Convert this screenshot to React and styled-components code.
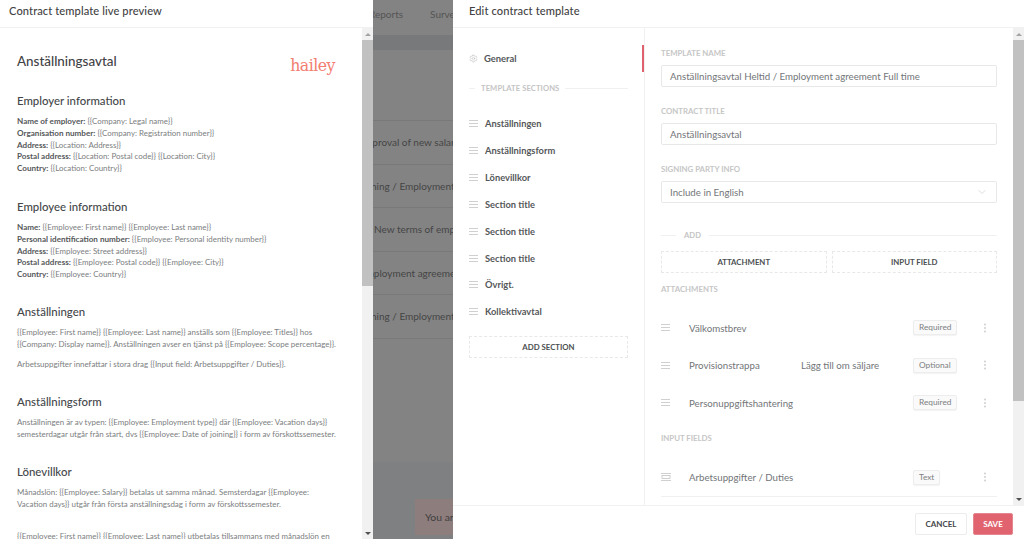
import React from 'react';
import styled, { createGlobalStyle } from 'styled-components';
import { Settings, ChevronDown } from 'lucide-react';

const GlobalStyle = createGlobalStyle`
    html, body {
        margin: 0;
        height: 100%;
        overflow: hidden;
        background: #fff;
        font-family: Lato, "Open Sans", sans-serif;
    }
    #root {
        height: 100%;
    }
`;

const Page = styled.div`
    display: flex;
    height: 539px;
    width: 1024px;
    overflow: hidden;
`;

const PreviewPanel = styled.section`
    width: 373px;
    flex: none;
    display: flex;
    flex-direction: column;
    background: #fff;
`;

const PanelHeader = styled.header`
    height: 28px;
    flex: none;
    box-sizing: border-box;
    padding: 0 ${(props) => props.$pad}px 7px;
    display: flex;
    align-items: center;
    border-bottom: 1px solid #f1f1f1;
    font-size: 11.1px;
    font-weight: 500;
    color: #3f4244;
    letter-spacing: 0.1px;
`;

const PanelBody = styled.div`
    flex: 1;
    min-height: 0;
    display: flex;
`;

const Document = styled.div`
    flex: 1;
    min-width: 0;
    height: 511px;
    overflow: hidden;
    padding: 25px 0 0 17px;
    box-sizing: border-box;
    color: #7b7e80;
    font-size: 7.93px;
    line-height: 11.8px;
`;

const DocTop = styled.div`
    display: flex;
    justify-content: space-between;
    padding-right: 27px;
    height: 32px;
`;

const DocTitle = styled.h1`
    margin: 0;
    font-size: 13.4px;
    line-height: 17px;
    font-weight: 500;
    color: #3f4244;
`;

const Logo = styled.div`
    font-family: "DejaVu Serif Condensed", "DejaVu Serif", serif;
    font-size: 17.5px;
    line-height: 22px;
    color: #f37d70;
    letter-spacing: -0.5px;
    padding-top: 1px;
`;

const DocHeading = styled.h2`
    margin: ${(props) => props.$top}px 0 0;
    font-size: 11.4px;
    line-height: 16px;
    font-weight: 500;
    color: #44474a;
`;

const DocLines = styled.div`
    margin-top: ${(props) => props.$top || 7}px;
`;

const DocLine = styled.div`
    white-space: nowrap;
    b {
        font-size: 8.1px;
        font-weight: 700;
        color: #55585a;
    }
`;

const ScrollTrack = styled.div`
    width: 11px;
    flex: none;
    background: #f1f1f1;
    display: flex;
    flex-direction: column;
`;

const ScrollArrow = styled.div`
    height: 12px;
    flex: none;
    display: flex;
    align-items: center;
    justify-content: center;
    &::after {
        content: '';
        border-left: 3px solid transparent;
        border-right: 3px solid transparent;
        ${(props) => (props.$down ? 'border-top: 3px solid #505050;' : 'border-bottom: 3px solid #a3a3a3;')}
    }
`;

const ScrollThumb = styled.div`
    height: ${(props) => props.$h}px;
    flex: none;
    background: #c1c1c1;
`;

const ScrollRest = styled.div`
    flex: 1;
`;

const Backdrop = styled.div`
    position: relative;
    width: 80px;
    flex: none;
    overflow: hidden;
    background: #838383;
    color: #454545;
    font-size: 10px;
    display: flex;
    flex-direction: column;
`;

const BackNav = styled.div`
    height: 28px;
    flex: none;
    display: flex;
    gap: 27px;
    align-items: center;
    margin-left: -4px;
    font-size: 10px;
    color: #555;
    white-space: nowrap;
`;

const BackTableHead = styled.div`
    height: 15px;
    flex: none;
    margin-top: 7px;
    background: #77797a;
`;

const BackGap = styled.div`
    height: 70px;
    flex: none;
`;

const BackRow = styled.div`
    height: 43.5px;
    flex: none;
    box-sizing: border-box;
    border-top: 1px solid #797979;
    display: flex;
    align-items: center;
    white-space: nowrap;
    padding-left: ${(props) => props.$indent}px;
`;

const BackRowText = styled.span`
    margin-left: ${(props) => props.$shift}px;
`;

const BackEmpty = styled.div`
    height: 123px;
    flex: none;
    border-top: 1px solid #797979;
`;

const BackFooter = styled.div`
    flex: 1;
    background: #7e8081;
`;

const Toast = styled.div`
    position: absolute;
    left: 42px;
    top: 499px;
    width: 60px;
    height: 36px;
    background: #8d7d7d;
    color: #3f3f3f;
    font-size: 10.4px;
    padding-left: 10px;
    line-height: 36px;
    white-space: nowrap;
`;

const EditPanel = styled.section`
    flex: 1;
    min-width: 0;
    display: flex;
    flex-direction: column;
    background: #fff;
`;

const EditBody = styled.div`
    height: 478px;
    flex: none;
    display: flex;
    border-bottom: 1px solid #f1f1f1;
    box-sizing: border-box;
`;

const Sidebar = styled.nav`
    width: 192px;
    flex: none;
    box-sizing: border-box;
    border-right: 1px solid #f1f1f1;
    padding: 17px 16px 0 16px;
    position: relative;
`;

const ActiveMark = styled.div`
    position: absolute;
    right: 0;
    top: 17px;
    width: 2px;
    height: 27px;
    background: #e0616d;
`;

const GeneralItem = styled.div`
    display: flex;
    align-items: center;
    gap: 6px;
    height: 27px;
    font-size: 9.4px;
    font-weight: 700;
    color: #55585a;
    padding-bottom: 1px;
    box-sizing: border-box;
    margin-bottom: 11px;
    svg {
        color: #b9b9b9;
    }
`;

const SectionDivider = styled.div`
    display: flex;
    align-items: center;
    gap: ${(props) => props.$gap}px;
    font-size: 7.6px;
    font-weight: 700;
    color: #c4c4c4;
    letter-spacing: 0.1px;
    &::before {
        content: '';
        width: ${(props) => props.$lead}px;
        height: 1px;
        background: #f0f0f0;
    }
    &::after {
        content: '';
        flex: 1;
        height: 1px;
        background: #f0f0f0;
    }
`;

const SectionList = styled.div`
    margin-top: 17.5px;
    display: flex;
    flex-direction: column;
`;

const SectionItem = styled.div`
    height: 26.85px;
    display: flex;
    align-items: center;
    gap: 7px;
    font-size: 9.3px;
    font-weight: 700;
    color: #55585a;
`;

const DashedButton = styled.button`
    width: ${(props) => props.$width || '100%'};
    height: 22px;
    flex: ${(props) => props.$flex || 'none'};
    padding: 0;
    background: #fff;
    border: 1px dashed #e8e8e8;
    font-family: inherit;
    font-size: 7.8px;
    font-weight: 700;
    color: #4c4f51;
    cursor: pointer;
`;

const AddSectionSlot = styled.div`
    margin-top: 8.5px;
`;

const MainColumn = styled.div`
    flex: 1;
    min-width: 0;
    display: flex;
`;

const MainScroll = styled.div`
    flex: 1;
    min-width: 0;
    padding: 20px 16px 0 16px;
    overflow: hidden;
    box-sizing: border-box;
`;

const FieldLabel = styled.div`
    font-size: 7.8px;
    line-height: 10px;
    font-weight: 700;
    color: #c6c6c6;
    margin-top: ${(props) => props.$top || 0}px;
`;

const TextBox = styled.div`
    height: 22px;
    margin-top: 7px;
    box-sizing: border-box;
    border: 1px solid #e8e8e8;
    border-radius: 2px;
    padding: 0 8px;
    display: flex;
    align-items: center;
    justify-content: space-between;
    font-size: 9.7px;
    color: #727578;
    svg {
        color: #bbb;
    }
`;

const ButtonRow = styled.div`
    display: flex;
    gap: 5px;
    margin-top: 11px;
`;

const RowList = styled.div`
    margin-top: ${(props) => props.$top}px;
`;

const ItemRow = styled.div`
    height: 37.5px;
    display: grid;
    grid-template-columns: 28px 112px 112px 1fr 24px;
    align-items: center;
    font-size: 9.7px;
    color: #727578;
    ${(props) => props.$ruled && 'border-bottom: 1px solid #f0f0f0;'}
`;

const Badge = styled.span`
    justify-self: start;
    height: 15px;
    line-height: 13px;
    box-sizing: border-box;
    border: 1px solid #ededed;
    border-radius: 2px;
    background: #fafafa;
    padding: 0 5px;
    font-size: 8.3px;
    color: #7d8082;
    box-shadow: 0 1px 1px rgba(0, 0, 0, 0.05);
`;

const Dots = styled.span`
    justify-self: center;
    width: 2px;
    height: 2px;
    border-radius: 50%;
    background: #cfcfcf;
    box-shadow: 0 -3.5px 0 #cfcfcf, 0 3.5px 0 #cfcfcf;
`;

const Footer = styled.footer`
    flex: 1;
    display: flex;
    justify-content: flex-end;
    align-items: center;
    gap: 6px;
    padding: 3px 11px 0 0;
`;

const FooterButton = styled.button`
    height: 22px;
    width: ${(props) => props.$width}px;
    padding: 0;
    border-radius: 2px;
    font-family: inherit;
    font-size: 8px;
    font-weight: 700;
    border: 1px solid ${(props) => (props.$primary ? '#e4868f' : '#ececec')};
    background: ${(props) => (props.$primary ? '#e0636f' : '#fff')};
    color: ${(props) => (props.$primary ? '#fff' : '#44474a')};
    cursor: pointer;
`;

const DragIcon = () => (
    <svg width="9" height="7" viewBox="0 0 9 7" fill="none" stroke="#c4c4c4" strokeWidth="0.8">
        <path d="M0 0.5H9M0 3.5H9M0 6.5H9" />
    </svg>
);

const InputIcon = () => (
    <svg width="10" height="8" viewBox="0 0 10 8" fill="none" stroke="#c4c4c4" strokeWidth="0.8">
        <path d="M0 0.5H10M0 7.5H10" />
        <rect x="1" y="2.5" width="8" height="3" />
    </svg>
);

const Scrollbar = ({ thumb }) => (
    <ScrollTrack>
        <ScrollArrow />
        <ScrollThumb $h={thumb} />
        <ScrollRest />
        <ScrollArrow $down />
    </ScrollTrack>
);

const documentBlocks = [
    {
        title: 'Employer information',
        top: 8,
        lines: [
            ['Name of employer:', '{{Company: Legal name}}'],
            ['Organisation number:', '{{Company: Registration number}}'],
            ['Address:', '{{Location: Address}}'],
            ['Postal address:', '{{Location: Postal code}} {{Location: City}}'],
            ['Country:', '{{Location: Country}}'],
        ],
    },
    {
        title: 'Employee information',
        top: 24,
        lines: [
            ['Name:', '{{Employee: First name}} {{Employee: Last name}}'],
            ['Personal identification number:', '{{Employee: Personal identity number}}'],
            ['Address:', '{{Employee: Street address}}'],
            ['Postal address:', '{{Employee: Postal code}} {{Employee: City}}'],
            ['Country:', '{{Employee: Country}}'],
        ],
    },
];

const sections = ['Anställningen', 'Anställningsform', 'Lönevillkor', 'Section title', 'Section title', 'Section title', 'Övrigt.', 'Kollektivavtal'];

const attachments = [
    { name: 'Välkomstbrev', note: '', kind: 'Required' },
    { name: 'Provisionstrappa', note: 'Lägg till om säljare', kind: 'Optional' },
    { name: 'Personuppgiftshantering', note: '', kind: 'Required' },
];

const App = () => {
    return (
        <Page>
            <GlobalStyle />
            <PreviewPanel>
                <PanelHeader $pad={9}>Contract template live preview</PanelHeader>
                <PanelBody>
                    <Document>
                        <DocTop>
                            <DocTitle>Anställningsavtal</DocTitle>
                            <Logo>hailey</Logo>
                        </DocTop>
                        {documentBlocks.map((block) => (
                            <div key={block.title}>
                                <DocHeading $top={block.top}>{block.title}</DocHeading>
                                <DocLines>
                                    {block.lines.map(([label, value]) => (
                                        <DocLine key={label}>
                                            <b>{label}</b> {value}
                                        </DocLine>
                                    ))}
                                </DocLines>
                            </div>
                        ))}
                        <DocHeading $top={23}>Anställningen</DocHeading>
                        <DocLines>
                            <DocLine>{'{{Employee: First name}} {{Employee: Last name}} anställs som {{Employee: Titles}} hos'}</DocLine>
                            <DocLine>{'{{Company: Display name}}. Anställningen avser en tjänst på {{Employee: Scope percentage}}.'}</DocLine>
                        </DocLines>
                        <DocLines $top={8}>
                            <DocLine>{'Arbetsuppgifter innefattar i stora drag {{Input field: Arbetsuppgifter / Duties}}.'}</DocLine>
                        </DocLines>
                        <DocHeading $top={24}>Anställningsform</DocHeading>
                        <DocLines>
                            <DocLine>{'Anställningen är av typen: {{Employee: Employment type}} där {{Employee: Vacation days}}'}</DocLine>
                            <DocLine>{'semesterdagar utgår från start, dvs {{Employee: Date of joining}} i form av förskottssemester.'}</DocLine>
                        </DocLines>
                        <DocHeading $top={23}>Lönevillkor</DocHeading>
                        <DocLines>
                            <DocLine>{'Månadslön: {{Employee: Salary}} betalas ut samma månad. Semsterdagar {{Employee:'}</DocLine>
                            <DocLine>{'Vacation days}} utgår från första anställningsdag i form av förskottssemester.'}</DocLine>
                        </DocLines>
                        <DocLines $top={20}>
                            <DocLine>{'{{Employee: First name}} {{Employee: Last name}} utbetalas tillsammans med månadslön en'}</DocLine>
                        </DocLines>
                    </Document>
                    <Scrollbar thumb={246} />
                </PanelBody>
            </PreviewPanel>

            <Backdrop>
                <BackNav>
                    <span>Reports</span>
                    <span>Surveys</span>
                </BackNav>
                <BackTableHead />
                <BackGap />
                <BackRow $indent={0}><BackRowText $shift={-13}>Approval of new salary</BackRowText></BackRow>
                <BackRow $indent={0}><BackRowText $shift={-2}>ning / Employment</BackRowText></BackRow>
                <BackRow $indent={1}><BackRowText $shift={0}>New terms of employment</BackRowText></BackRow>
                <BackRow $indent={0}><BackRowText $shift={-13}>Employment agreement</BackRowText></BackRow>
                <BackRow $indent={0}><BackRowText $shift={-2}>ning / Employment</BackRowText></BackRow>
                <BackEmpty />
                <BackFooter />
                <Toast>You are</Toast>
            </Backdrop>

            <EditPanel>
                <PanelHeader $pad={16}>Edit contract template</PanelHeader>
                <EditBody>
                    <Sidebar>
                        <ActiveMark />
                        <GeneralItem>
                            <Settings size={9} strokeWidth={1.5} />
                            General
                        </GeneralItem>
                        <SectionDivider $lead={6} $gap={6}>TEMPLATE SECTIONS</SectionDivider>
                        <SectionList>
                            {sections.map((name, index) => (
                                <SectionItem key={index}>
                                    <DragIcon />
                                    {name}
                                </SectionItem>
                            ))}
                        </SectionList>
                        <AddSectionSlot>
                            <DashedButton>ADD SECTION</DashedButton>
                        </AddSectionSlot>
                    </Sidebar>
                    <MainColumn>
                        <MainScroll>
                            <FieldLabel>TEMPLATE NAME</FieldLabel>
                            <TextBox>Anställningsavtal Heltid / Employment agreement Full time</TextBox>
                            <FieldLabel $top={19}>CONTRACT TITLE</FieldLabel>
                            <TextBox>Anställningsavtal</TextBox>
                            <FieldLabel $top={19}>SIGNING PARTY INFO</FieldLabel>
                            <TextBox>
                                Include in English
                                <ChevronDown size={12} strokeWidth={1} />
                            </TextBox>
                            <RowList $top={27}>
                                <SectionDivider $lead={15} $gap={8}>ADD</SectionDivider>
                            </RowList>
                            <ButtonRow>
                                <DashedButton $flex="1">ATTACHMENT</DashedButton>
                                <DashedButton $flex="1">INPUT FIELD</DashedButton>
                            </ButtonRow>
                            <FieldLabel $top={11}>ATTACHMENTS</FieldLabel>
                            <RowList $top={15}>
                                {attachments.map((item) => (
                                    <ItemRow key={item.name}>
                                        <DragIcon />
                                        <span>{item.name}</span>
                                        <span>{item.note}</span>
                                        <Badge>{item.kind}</Badge>
                                        <Dots />
                                    </ItemRow>
                                ))}
                            </RowList>
                            <FieldLabel $top={11}>INPUT FIELDS</FieldLabel>
                            <RowList $top={16}>
                                <ItemRow $ruled>
                                    <InputIcon />
                                    <span>Arbetsuppgifter / Duties</span>
                                    <span />
                                    <Badge>Text</Badge>
                                    <Dots />
                                </ItemRow>
                            </RowList>
                        </MainScroll>
                        <Scrollbar thumb={361} />
                    </MainColumn>
                </EditBody>
                <Footer>
                    <FooterButton $width={52}>CANCEL</FooterButton>
                    <FooterButton $primary $width={40}>SAVE</FooterButton>
                </Footer>
            </EditPanel>
        </Page>
    );
};

export default App;
